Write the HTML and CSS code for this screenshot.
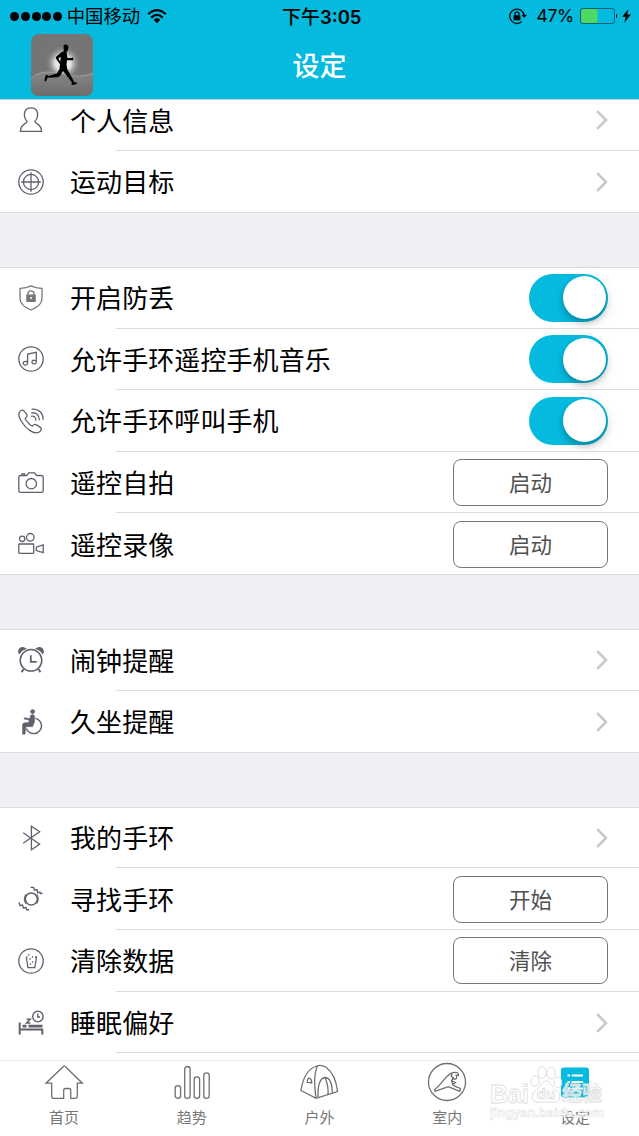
FILE: index.html
```html
<!DOCTYPE html>
<html lang="zh-CN">
<head>
<meta charset="utf-8">
<title>设定</title>
<link rel="stylesheet" href="styles.css">
</head>
<body>
<svg class="defs" width="0" height="0">
  <symbol id="chevron" viewBox="0 0 12 20"><path d="M1.2 1.2 10 10 1.2 18.8" fill="none" stroke="#c7c7cc" stroke-width="2.6"/></symbol>
</svg>
<div class="screen">
  <header class="header">
    <div class="status">
      <div class="status-left">
        <span class="dots"><i></i><i></i><i></i><i></i><i></i></span>
        <span class="carrier">中国移动</span>
        <svg class="wifi" viewBox="0 0 20 15" width="20" height="15"><g fill="none" stroke="#000" stroke-width="2.2"><path d="M1.2 5.2Q10-3 18.8 5.2"/><path d="M4.3 8.6Q10 3.2 15.7 8.6"/></g><path d="M6.7 10.7Q10 7.8 13.3 10.7L10 14.2z"/></svg>
      </div>
      <span class="time">下午<b>3:05</b></span>
      <div class="status-right">
        <svg class="lock" viewBox="0 0 18 17" width="18" height="17"><path d="M12.6 13.8A7.200 7.200 0 1 1 15.200 8" fill="none" stroke="#000" stroke-width="1.3"/><path d="M12.6 6.800H17.900L15.200 10z"/><rect x="4.6" y="7.3" width="6.8" height="5" rx=".6"/><path d="M6 7.6V5.8a2 2 0 0 1 4 0v1.8" fill="none" stroke="#000" stroke-width="1.2"/></svg>
        <span class="percent">47%</span>
        <svg class="battery" viewBox="0 0 38 16" width="38" height="16"><rect x="1" y="1" width="16.5" height="14" rx="1.5" fill="#4cd964"/><rect x=".5" y=".5" width="34" height="15" rx="2.5" fill="none" stroke="#046273"/><path d="M36 5.5q2 2.5 0 5z"/></svg>
        <svg class="bolt" viewBox="0 0 9 14" width="9" height="14"><path d="M6.4 0 .2 7.8H3.8L2.2 14 8.8 5.4H5.2z"/></svg>
      </div>
    </div>
    <div class="nav">
      <svg class="avatar" viewBox="0 0 62 62" width="62" height="62">
        <defs>
          <radialGradient id="glow"><stop offset="0" stop-color="#fff"/><stop offset=".45" stop-color="#ececec" stop-opacity=".9"/><stop offset="1" stop-color="#757575" stop-opacity="0"/></radialGradient>
          <linearGradient id="ground" x1="0" y1="0" x2="0" y2="1"><stop offset="0" stop-color="#858585"/><stop offset="1" stop-color="#6d6d6d"/></linearGradient>
        </defs>
        <rect width="62" height="62" rx="8" fill="#757575"/>
        <circle cx="32" cy="29" r="18" fill="url(#glow)"/>
        <path d="M0 45C7 37 18 37 30 39.5S48 44 62 39.5V54q0 8-8 8H8q-8 0-8-8z" fill="url(#ground)"/>
        <path d="M0 45C7 37 18 37 30 39.5S48 44 62 39.5" fill="none" stroke="#aaa" stroke-width=".8"/>
        <path d="M32.5 11.5Q34 10 36.5 11L37.5 13 37 16Q36 17.5 35.5 18L36 21 36.5 24 41.5 24V23L42.2 24V26.3H36L35.5 31 36.3 35 40.5 43 43.5 48.6 46 48.5V50L41.2 51 40.4 50.2 41 48.5 36 42 32 37 29 42 26.5 43.2 16.5 43.8 15 47.5 13.5 47 14.3 42 15.8 40.5 17.2 42 26 39.6 28.5 35 29 30 29.8 23 27.4 24.3 30 29 28.8 30 24.9 24.6V23L30 18.5 32.8 17.2z" fill="#000"/>
      </svg>
      <h1 class="title">设定</h1>
    </div>
  </header>

  <main class="list">
    <section class="group">
      <div class="row">
        <svg class="icon" viewBox="0 0 26 26"><path d="M9.2 14.5C6 11.5 5.7 6.6 7.3 3.6 9.4-.1 16.6-.1 18.7 3.6c1.6 3 1.3 7.9-1.9 10.9 0 2 6.7 2.4 6.8 9.9H2.4C2.5 16.9 9.2 16.5 9.2 14.5z"/></svg>
        <div class="cell"><span class="label">个人信息</span><svg class="chev"><use href="#chevron"/></svg></div>
      </div>
      <div class="row">
        <svg class="icon" viewBox="0 0 26 26"><circle cx="13" cy="13" r="12.2"/><circle cx="13" cy="13" r="7.6"/><path d="M13 3.2V22.8M3.2 13H22.8"/></svg>
        <div class="cell"><span class="label">运动目标</span><svg class="chev"><use href="#chevron"/></svg></div>
      </div>
    </section>

    <section class="group">
      <div class="row">
        <svg class="icon gray" viewBox="0 0 26 26"><path d="M13 .9Q17.5 3.4 24 3.3V13.5Q24 20.5 13 25 2 20.5 2 13.5V3.3Q8.500 3.4 13 .9z"/><path d="M9.900 10.500V9a3.100 3.100 0 0 1 6.200 0v1.500"/><path class="fill" d="M8.900 10.200h8.200v6.200h-8.200z"/><circle cx="13" cy="13" r="1" fill="#fff" stroke="none"/></svg>
        <div class="cell"><span class="label">开启防丢</span><span class="switch"></span></div>
      </div>
      <div class="row">
        <svg class="icon" viewBox="0 0 26 26"><circle cx="13" cy="13" r="12.200"/><path d="M9.600 17.500V8.100L18.300 6.300V16.300M9.600 17.500a2.200 1.800 0 1 1-1.800-2L9.600 16M18.300 16.300a2.200 1.800 0 1 1-1.800-2L18.300 15"/></svg>
        <div class="cell"><span class="label">允许手环遥控手机音乐</span><span class="switch"></span></div>
      </div>
      <div class="row">
        <svg class="icon" viewBox="0 0 26 26"><path d="M2 3.400C3.300 1.900 5 1.700 6.300 3.300L8.600 6.300C9.700 8.300 8.600 9.400 7.300 10.200 6.300 11 12.700 18 14.300 18.100 15.500 16.600 17 15.900 18.500 16.900L22 19.100C24.500 20.600 23 22.600 21.500 23.700 16 27.500 7.600 20.300 3.800 14 1 9.500-.2 5.800 2 3.400z"/><path d="M13 8.300Q17.800 7.400 18 12.800M13.200 4.800Q21 4 21.400 12.300M13.600 1.200Q25 .8 25.200 11.800"/></svg>
        <div class="cell"><span class="label">允许手环呼叫手机</span><span class="switch"></span></div>
      </div>
      <div class="row">
        <svg class="icon" viewBox="0 0 26 26"><path d="M2.500 5.500H8.800L10.700 2.900H16.500L18.500 5.500H23.400Q25.200 5.500 25.200 7.200V20.700Q25.200 22.300 23.400 22.300H2.500Q.8 22.300.8 20.700V7.200Q.8 5.500 2.500 5.500zM4 5.300V3.800H6.600V5.300"/><circle cx="13.300" cy="13.700" r="5.200"/></svg>
        <div class="cell"><span class="label">遥控自拍</span><button class="btn">启动</button></div>
      </div>
      <div class="row">
        <svg class="icon" viewBox="0 0 26 26"><circle cx="4.200" cy="7.800" r="2.700"/><circle cx="12.300" cy="6.300" r="3.800"/><path d="M1.600 13H15Q15.700 13 15.700 13.700V21.500Q15.700 22.300 15 22.300H1.600Q.8 22.300.8 21.500V13.700Q.8 13 1.600 13zM18.300 16.200 25.200 14V21.700L18.300 19.500z"/></svg>
        <div class="cell"><span class="label">遥控录像</span><button class="btn">启动</button></div>
      </div>
    </section>

    <section class="group">
      <div class="row">
        <svg class="icon" viewBox="0 0 26 26"><circle cx="13" cy="13.300" r="10.800" stroke-width="1.500"/><path d="M12.800 8.300V14.800H18.700" stroke-width="1.800"/><path class="fill" d="M.8 5.300Q.5.800 5 .6L7.300 1.600Q3 3 1.400 6.300zM25.200 5.300Q25.500.8 21 .6L18.700 1.600Q23 3 24.600 6.300z"/><path d="M5.500 22.300 3.600 25.200M20.500 22.300 22.400 25.200" stroke-width="2"/></svg>
        <div class="cell"><span class="label">闹钟提醒</span><svg class="chev"><use href="#chevron"/></svg></div>
      </div>
      <div class="row">
        <svg class="icon" viewBox="0 0 26 26"><circle class="fill" cx="14.600" cy="2.600" r="1.700"/><path class="fill" d="M12.400 6.500Q15 4.500 16.700 7L16.500 13 14.500 17.700H8L7 25.200H4.500V15.500Q5 13.800 7 13.700L10.800 13.400 11 11 6 10 6.200 8.800 12 9.500z" stroke-width=".5"/><path d="M17.500 9.400A7.700 7.700 0 1 1 8.500 19.500" stroke-width="1.400"/></svg>
        <div class="cell"><span class="label">久坐提醒</span><svg class="chev"><use href="#chevron"/></svg></div>
      </div>
    </section>

    <section class="group">
      <div class="row">
        <svg class="icon" viewBox="0 0 26 26"><path d="M5.200 7.700 21.600 19.300 13.400 24.700V1.300L21.600 6.700 5.200 18.300"/></svg>
        <div class="cell"><span class="label">我的手环</span><svg class="chev"><use href="#chevron"/></svg></div>
      </div>
      <div class="row">
        <svg class="icon" viewBox="0 0 26 26"><circle cx="13.300" cy="13" r="6" stroke-width="1.500"/><path d="M8 8.500Q5 13 8 17.500M18.600 8.500Q21.600 13 18.600 17.500M12.500 1.400H15.500L16.500 4 19 3.800 19.700 6.600 22 6.100 22.300 7.500H24.500M1 16.500 2 19.500 4.500 19 5.500 22 8 21.500 8.800 23.800H11.200" stroke-width="1.400"/></svg>
        <div class="cell"><span class="label">寻找手环</span><button class="btn">开始</button></div>
      </div>
      <div class="row">
        <svg class="icon" viewBox="0 0 26 26"><circle cx="13" cy="13" r="12.200"/><path d="M8.300 9H9.500M17 9H18.500L16.800 19.700H9.900L8.300 9"/><path class="fill" d="M10.300 6.300h1v1h-1zM14 8.500h1v1h-1zM11.500 10.500h1v1h-1zM14 13.500h1v1h-1zM12 15.500h1v1h-1z" stroke-width=".4"/></svg>
        <div class="cell"><span class="label">清除数据</span><button class="btn">清除</button></div>
      </div>
      <div class="row">
        <svg class="icon" viewBox="0 0 26 26"><path d="M1.700 12.500V24.500M2 19.500H24.300V24.500" stroke-width="2"/><path d="M4.500 16.200H8.500M10.500 16.200H24.500" stroke-width="2.800"/><path d="M8.500 9.300H12.200L8.500 13H12.500" stroke-width="1.500"/><circle cx="19.900" cy="6.500" r="5.200" stroke-width="1.400"/><path d="M19.700 3.500V7H22"/></svg>
        <div class="cell"><span class="label">睡眠偏好</span><svg class="chev"><use href="#chevron"/></svg></div>
      </div>
      <div class="row"></div>
    </section>
  </main>

  <nav class="tabs">
    <a class="tab"><svg viewBox="0 0 40 40"><path d="M20.300 4.200Q21 4.200 22 5.300L38.300 21.200H33.300V34Q33.300 36.300 31.300 36.300H26.700V28.500Q26.700 26.500 25 26.500H21.500Q19.700 26.500 19.700 28.500V36.300H9.500Q7.700 36.300 7.700 34.300V21.200H2L18.600 5.300Q19.600 4.200 20.300 4.200z"/></svg><span>首页</span></a>
    <a class="tab"><svg viewBox="0 0 40 40"><rect x="3.200" y="23.700" width="5.400" height="12.600" rx="2.600"/><rect x="12.700" y="4.500" width="5.400" height="31.800" rx="2.600"/><rect x="22.200" y="14.800" width="5.400" height="21.500" rx="2.600"/><rect x="31.800" y="10.800" width="5.400" height="25.500" rx="2.600"/></svg><span>趋势</span></a>
    <a class="tab"><svg viewBox="0 0 40 40"><path d="M2 28.500C3.500 18 7.500 7.500 17.500 4Q22 2.200 27 5.300C34 10.500 37.500 20 38.500 29.500L17 36.300zM18.500 4C15 11 15.300 24 17 36M19 35C18.700 25.500 20 16.500 26 15.500 30.500 15.500 33 22 33.300 30.500M26 15.800Q29.700 24 29 32M8.200 20.300Q8.600 15.500 10.700 16.200 12.900 17.500 12.700 21z"/></svg><span>户外</span></a>
    <a class="tab"><svg viewBox="0 0 40 40"><circle cx="20" cy="20" r="18.500"/><path d="M7.700 27.500C15 22 20 11.300 26 10.700 29.500 9.600 32.200 11 31.500 13.500L29.200 13.200Q30.700 16.600 27.500 17.400L25.500 16 24.800 19.600 26 23Q29 25 33.500 26.500L32.700 29.300 21.300 24.700 8 29.300zM25 11.500 24.300 14.500 27 16M24 18.500 28.500 20.500 26 22.200"/></svg><span>室内</span></a>
    <a class="tab"><svg viewBox="0 0 40 40"><rect x="6" y="5.500" width="28" height="30" rx="3" fill="#04bade" stroke="none"/><path d="M12.500 13.500h2.500M16.500 13.500H28M12.500 20h2.500M16.500 20H28M12.500 26.500h2.500M16.500 26.500H28" stroke="#fff" stroke-width="2"/></svg><span>设定</span></a>
  </nav>

  <div class="watermark">
    <div class="brand"><span class="latin">Bai</span>
      <svg viewBox="0 0 34 38" width="34" height="38"><g fill="#fff" fill-opacity=".75" stroke="#dedede"><ellipse cx="6" cy="15" rx="4" ry="5.500"/><ellipse cx="13" cy="6.500" rx="4.200" ry="5.800"/><ellipse cx="22" cy="7" rx="4.200" ry="5.800"/><ellipse cx="29" cy="16.500" rx="3.800" ry="5.500"/><path d="M17 15C22 15 22 21 27 24 33 28 32 37 24 36.500Q17 35 10 36.500C2 37 1 28 7 24 12 21 12 15 17 15z"/></g><text class="du" x="17" y="33" text-anchor="middle">du</text></svg>
      <span class="cn">经验</span></div>
    <div class="url">jingyan.baidu.com</div>
  </div>
</div>
</body>
</html>
```
FILE: styles.css
```css
* { box-sizing: border-box; }

body {
  margin: 0;
  font-family: "Noto Sans CJK SC", sans-serif;
  color: #000;
}

.defs { display: block; }

.screen {
  position: relative;
  display: flex;
  flex-direction: column;
  width: 639px;
  height: 1136px;
  overflow: hidden;
  background: #fff;
}

/* Header */
.header { height: 99px; flex: none; background: #04bade; }

.status {
  display: grid;
  grid-template-columns: 1fr auto 1fr;
  align-items: center;
  height: 32px;
  padding: 0 8px 0 10px;
  font-size: 18.4px;
  line-height: 31px;
}

.status-left, .status-right { display: flex; align-items: center; }
.carrier, .time, .percent { height: 32px; }
.status-right { justify-content: flex-end; }
.dots { display: flex; gap: 1.800px; margin-right: 4.500px; }
.dots i { width: 9px; height: 9px; border-radius: 50%; background: #000; }
.wifi { margin-left: 7px; }
.time { padding-left: 2.500px; font-weight: 500; font-size: 19px; }
.time b { font-family: Inter, sans-serif; font-weight: 600; font-size: 18.500px; }
.percent { margin: 0 6px 0 10px; font-family: Inter, sans-serif; font-size: 17.500px; letter-spacing: -.3px; }
.bolt { margin-left: 4px; }

.nav {
  display: grid;
  grid-template-columns: 62px 1fr 62px;
  padding: 2px 31px 0;
}

.title {
  margin: 0;
  text-align: center;
  color: #fff;
  font-size: 27px;
  font-weight: 500;
  line-height: 62px;
}

/* Settings list */
.list { flex: 1; min-height: 0; overflow: hidden; background: #efeff4; border-top: 1px solid #c5d6da; }

.group {
  margin-bottom: 54.200px;
  background: #fff;
  box-shadow: inset 0 1px #dcdce0, inset 0 -1px #dcdce0;
}

.group:first-child { margin-top: -10.670px; }
.group:last-child { margin-bottom: 0; }

.row { display: flex; align-items: center; height: 61.670px; padding-left: 18px; }

.icon {
  width: 26px;
  height: 26px;
  flex: none;
  margin-right: 26px;
  fill: none;
  stroke: #62606c;
  stroke-width: 1.300;
}

.icon .fill { fill: #62606c; }
.icon.gray { stroke: #777; }
.icon.gray .fill { fill: #777; }

.cell {
  position: relative;
  display: flex;
  flex: 1;
  align-items: center;
  justify-content: space-between;
  height: 100%;
  padding-right: 31px;
}

.row:not(:last-child) .cell::after {
  content: "";
  position: absolute;
  left: 46px;
  right: 0;
  bottom: 0;
  height: 1px;
  background: #dcdce0;
}

.label { padding-bottom: 1px; font-size: 26px; line-height: 38px; letter-spacing: .08px; }
.chev { width: 12px; height: 20px; }

.switch {
  display: flex;
  justify-content: flex-end;
  width: 79px;
  height: 48px;
  padding: 2.500px;
  border-radius: 24px;
  background: #04bade;
}

.switch::before {
  content: "";
  width: 43px;
  height: 43px;
  border-radius: 50%;
  background: #fff;
  box-shadow: 0 4px 6px rgba(0, 0, 0, .22), 3px 5px 14px rgba(0, 0, 0, .08);
}

.btn {
  width: 155px;
  height: 47px;
  padding: 0 0 2px;
  border: 1px solid #777;
  border-radius: 8px;
  background: #fff;
  color: #505050;
  font-family: inherit;
  font-size: 21.500px;
}

/* Tab bar */
.tabs {
  display: grid;
  grid-template-columns: repeat(5, 1fr);
  flex: none;
  height: 76px;
  border-top: 1px solid #ececec;
  background: #fff;
}

.tab {
  display: flex;
  flex-direction: column;
  align-items: center;
  padding-top: 1px;
  color: #777;
  font-size: 15px;
  line-height: 22px;
}

.tab svg { width: 40px; height: 40px; margin-bottom: 4px; fill: none; stroke: #6f6f6f; stroke-width: 1.300; }

/* Watermark over the tab bar */
.watermark {
  position: absolute;
  left: 490px;
  top: 1066px;
  width: 118px;
  color: rgba(255, 255, 255, .75);
  font-family: "Liberation Sans", "Noto Sans CJK SC", sans-serif;
  font-weight: 700;
  -webkit-text-stroke: .8px #dedede;
}

.brand { display: flex; align-items: flex-start; height: 38px; white-space: nowrap; }
.brand svg { flex: none; margin-right: -1px; }
.latin { width: 39px; padding-top: 11px; font-size: 25px; line-height: 34px; }
.cn { padding-top: 12px; font-size: 20px; line-height: 32px; }
.du { font-size: 15px; fill: #fff; stroke: #dadada; stroke-width: .7px; }
.url { font-size: 13px; line-height: 18px; -webkit-text-stroke-width: .5px; }
```
